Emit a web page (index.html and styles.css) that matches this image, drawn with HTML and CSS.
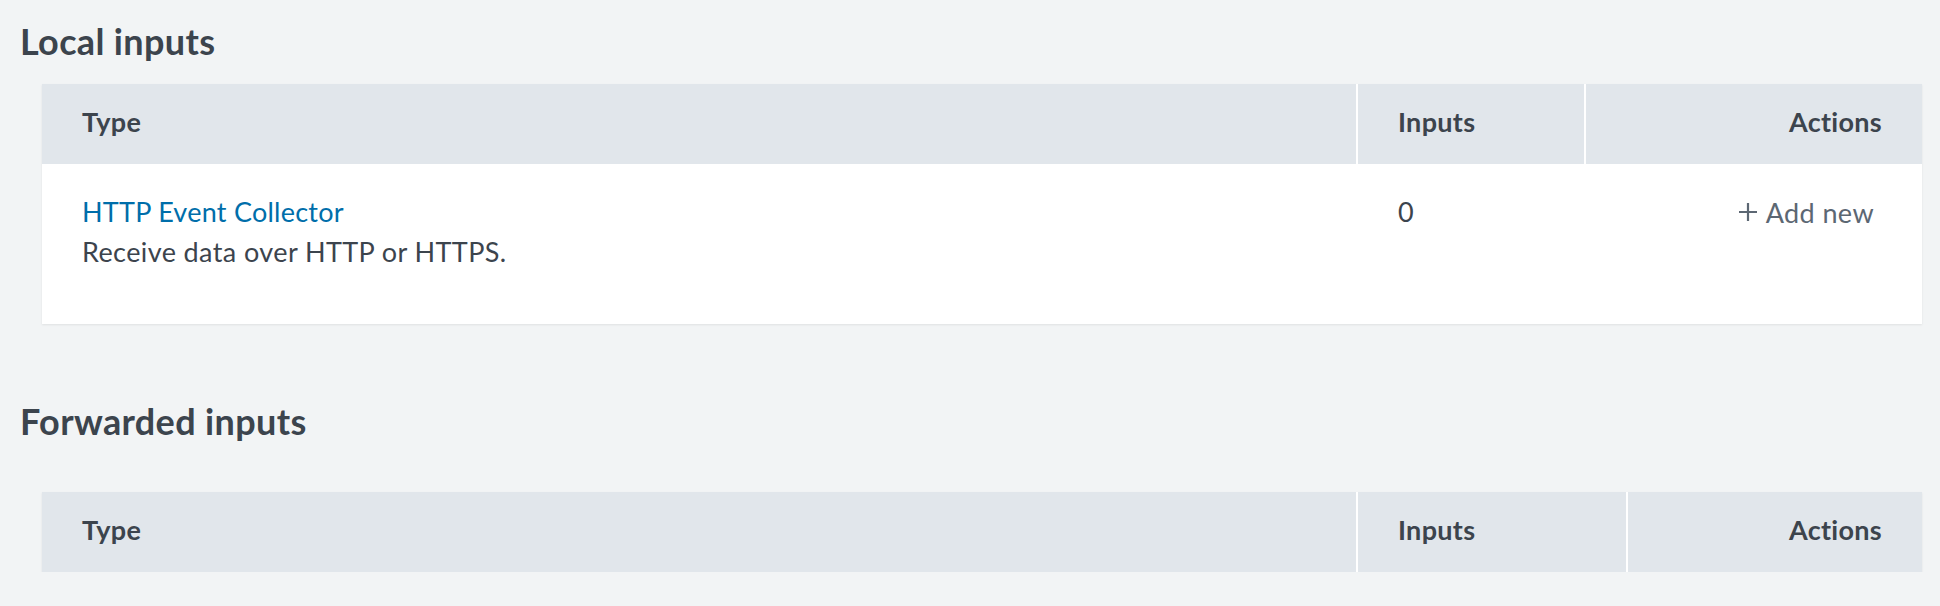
FILE: index.html
```html
<!DOCTYPE html>
<html lang="en">
<head>
<meta charset="utf-8">
<title>Data inputs</title>
<link rel="stylesheet" href="styles.css">
</head>
<body>
<main class="page">
  <section class="section section-local">
    <h2 class="section-title">Local inputs</h2>
    <div class="data-table cols-local">
      <div class="th">Type</div>
      <div class="th">Inputs</div>
      <div class="th th-right">Actions</div>
      <div class="td">
        <a class="type-link" href="#">HTTP Event Collector</a>
        <div class="type-desc">Receive data over HTTP or HTTPS.</div>
      </div>
      <div class="td">0</div>
      <div class="td td-right">
        <a class="add-btn" href="#"><svg class="add-icon" viewBox="0 0 20 20" width="20" height="20" aria-hidden="true"><path d="M10 1V19M1 10H19" stroke="currentColor" stroke-width="2.2" fill="none"/></svg><span>Add new</span></a>
      </div>
    </div>
  </section>
  <section class="section section-forwarded">
    <h2 class="section-title">Forwarded inputs</h2>
    <div class="data-table cols-forwarded">
      <div class="th">Type</div>
      <div class="th">Inputs</div>
      <div class="th th-right">Actions</div>
    </div>
  </section>
</main>
</body>
</html>
```

FILE: styles.css
```css
html, body {
  margin: 0;
  padding: 0;
  background: #f2f4f5;
}

body {
  font-family: Lato, "Noto Sans", sans-serif;
  color: #3c444d;
}

.page {
  padding: 20px 18px 0 20px;
}

.section-title {
  margin: 0;
  font-size: 36px;
  line-height: 42px;
  font-weight: 700;
  letter-spacing: 0.35px;
  color: #3c444d;
}

.section-local .data-table {
  margin-top: 22px;
}

.section-forwarded {
  margin-top: 76px;
}

.section-forwarded .data-table {
  margin-top: 50px;
}

.data-table {
  margin-left: 22px;
  display: grid;
  column-gap: 2px;
  background: #ffffff;
  box-shadow: 0 1px 2px rgba(0, 0, 0, 0.08);
}

.cols-local {
  grid-template-columns: 1fr 226px 336px;
}

.cols-forwarded {
  grid-template-columns: 1fr 268px 294px;
}

.th {
  background: #e1e6eb;
  padding: 18px 40px 22px 40px;
  font-size: 27px;
  line-height: 40px;
  font-weight: 700;
  letter-spacing: 0.3px;
  color: #3c444d;
}

.th-right {
  text-align: right;
}

.td {
  padding: 28px 40px 52px 40px;
  font-size: 27px;
  line-height: 40px;
  letter-spacing: 0.4px;
  color: #3c444d;
}

.td-right {
  text-align: right;
}

.type-link {
  color: #006eaa;
  text-decoration: none;
  letter-spacing: 0.25px;
}

.type-desc {
  color: #3c444d;
}

.add-btn {
  display: inline-flex;
  align-items: center;
  gap: 8px;
  margin-right: 8px;
  color: #5c6773;
  text-decoration: none;
}

.add-icon {
  display: block;
  margin-top: -1px;
}
```
